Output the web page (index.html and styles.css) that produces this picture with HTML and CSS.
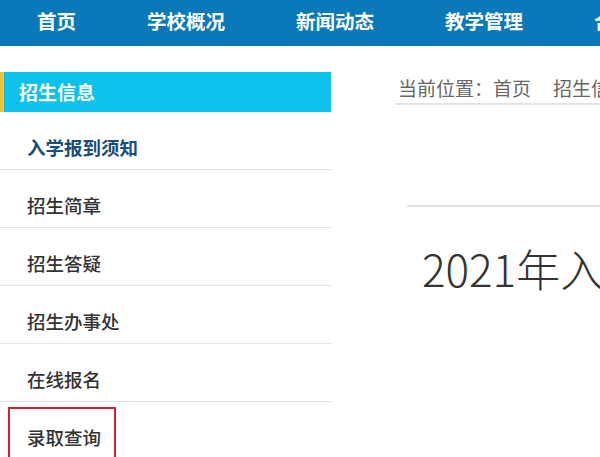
FILE: index.html
```html
<!DOCTYPE html>
<html lang="zh-CN">
<head>
  <meta charset="UTF-8" />
  <meta name="viewport" content="width=device-width, initial-scale=1.0"/>
  <title>招生信息 - 入学报到须知</title>
  <link rel="stylesheet" href="styles.css">
</head>
<body>
  <nav class="topnav">
    <a href="#">首页</a>
    <a href="#">学校概况</a>
    <a href="#">新闻动态</a>
    <a href="#">教学管理</a>
    <a href="#">合作交流</a>
  </nav>

  <div class="main">
    <aside class="sidebar">
      <div class="side-title">招生信息</div>
      <ul class="side-menu">
        <li class="active"><a href="#">入学报到须知</a></li>
        <li><a href="#">招生简章</a></li>
        <li><a href="#">招生答疑</a></li>
        <li><a href="#">招生办事处</a></li>
        <li><a href="#">在线报名</a></li>
        <li class="marked"><a href="#">录取查询</a></li>
      </ul>
    </aside>

    <section class="content">
      <div class="crumbs">当前位置：首页<span class="crumb-next">招生信息</span></div>
      <article class="article">
        <h1>2021年入学报到须知</h1>
      </article>
    </section>
  </div>
</body>
</html>
```

FILE: styles.css
```css
:root {
  --nav: #0a79b9;
  --cyan: #0cc1ea;
  --gold: #f1c232;
  --line: #e3e3e3;
  --text: #333;
  --active: #1b4d78;
}

html, body {
  margin: 0;
  overflow: hidden;
}

body {
  font-family: "Noto Sans CJK SC", "Noto Sans", sans-serif;
  background: #fff;
  color: var(--text);
  width: 600px;
  height: 457px;
}

a {
  text-decoration: none;
  color: inherit;
}

/* top menu */
.topnav {
  display: flex;
  gap: 71px;
  height: 46px;
  padding-left: 37px;
  background: var(--nav);
  white-space: nowrap;
  overflow: hidden;
}

.topnav a {
  color: #fff;
  font-size: 19.5px;
  font-weight: bold;
  line-height: 42px;
}

.main {
  display: flex;
}

/* left column */
.sidebar {
  width: 331px;
  flex-shrink: 0;
  padding-top: 26px;
}

.side-title {
  height: 40px;
  line-height: 40px;
  padding-left: 15px;
  background: var(--cyan);
  border-left: 4px solid var(--gold);
  color: #fff;
  font-size: 19px;
  font-weight: bold;
}

.side-menu {
  list-style: none;
  margin: 0;
  padding: 0;
}

.side-menu li {
  position: relative;
  padding: 25px 0 12px 27px;
  line-height: 20px;
  font-size: 18.5px;
  font-weight: 500;
  border-bottom: 1px solid var(--line);
}

.side-menu li.active {
  color: var(--active);
  font-weight: bold;
}

.side-menu li.marked {
  border-bottom: none;
}

.side-menu li.marked::after {
  content: "";
  position: absolute;
  left: 8px;
  top: 5px;
  width: 104px;
  height: 55px;
  border: 2px solid #d3222c;
}

/* right column */
.content {
  flex: 1;
  min-width: 0;
  padding-left: 64px;
  white-space: nowrap;
}

.crumbs {
  margin-top: 27px;
  padding-left: 3px;
  line-height: 30px;
  font-size: 19px;
  color: #666;
  border-bottom: 2px solid var(--line);
}

.crumb-next {
  margin-left: 22px;
}

.article {
  margin: 100px 0 0 12px;
  border-top: 2px solid var(--line);
}

.article h1 {
  margin: 0;
  padding: 34px 0 0 15px;
  font-size: 44px;
  font-weight: 300;
  line-height: 54px;
  color: #333;
}
```
